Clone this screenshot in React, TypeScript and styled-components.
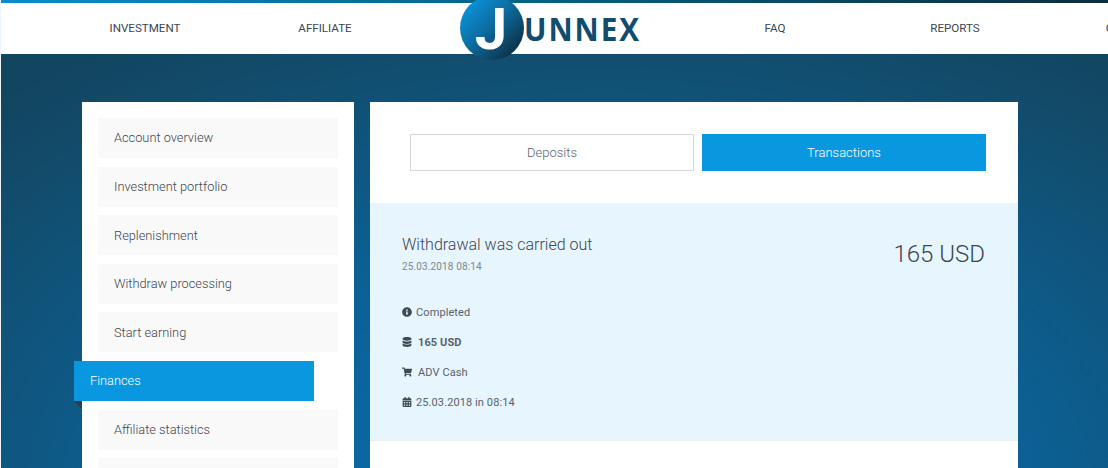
import React from 'react';
import styled, {createGlobalStyle} from 'styled-components';
import {FaInfoCircle, FaDatabase, FaShoppingCart, FaCalendarAlt} from 'react-icons/fa';

const GlobalStyle = createGlobalStyle`
  * {
    box-sizing: border-box;
  }

  html, body {
    margin: 0;
    padding: 0;
    height: 100%;
    overflow: hidden;
    background: #eef6fd;
    font-family: Roboto, "Liberation Sans", sans-serif;
  }
`

const menu = [
    'Account overview',
    'Investment portfolio',
    'Replenishment',
    'Withdraw processing',
    'Start earning',
    'Finances',
    'Affiliate statistics',
    '',
];

function App() {
    return (
        <Page>
            <GlobalStyle/>
            <TopLine/>
            <Header>
                <NavLink>INVESTMENT</NavLink>
                <NavLink>AFFILIATE</NavLink>
                <Logo>
                    <LogoCircle>J</LogoCircle>
                    <LogoText>UNNEX</LogoText>
                </Logo>
                <NavLink>FAQ</NavLink>
                <NavLink>REPORTS</NavLink>
                <NavLink>CONTACTS</NavLink>
            </Header>
            <Hero>
                <Sidebar>
                    {menu.map((item, index) => (
                        <MenuItem key={index} $active={item === 'Finances'}>
                            {item}
                        </MenuItem>
                    ))}
                </Sidebar>
                <Main>
                    <Tabs>
                        <Tab>Deposits</Tab>
                        <Tab $active>Transactions</Tab>
                    </Tabs>
                    <Transaction>
                        <TransactionHead>
                            <div>
                                <TransactionTitle>Withdrawal was carried out</TransactionTitle>
                                <TransactionDate>25.03.2018 08:14</TransactionDate>
                            </div>
                            <Amount>165 USD</Amount>
                        </TransactionHead>
                        <Details>
                            <DetailRow>
                                <FaInfoCircle/>
                                Completed
                            </DetailRow>
                            <DetailRow $bold $wide>
                                <FaDatabase/>
                                165 USD
                            </DetailRow>
                            <DetailRow $wide>
                                <FaShoppingCart/>
                                ADV Cash
                            </DetailRow>
                            <DetailRow>
                                <FaCalendarAlt/>
                                25.03.2018 in 08:14
                            </DetailRow>
                        </Details>
                    </Transaction>
                </Main>
            </Hero>
        </Page>
    );
}

export default App;

const Page = styled.div`
  width: 1108px;
  height: 468px;
  padding-left: 1px;
  overflow: hidden;
  position: relative;
`

const TopLine = styled.div`
  height: 3px;
  background: linear-gradient(90deg, #0a8ccb 0%, #05607f 50%, #0e2d3d 100%);
`

const Header = styled.header`
  display: flex;
  align-items: center;
  height: 51px;
  padding-left: 54px;
  background: #fff;
  width: 1300px;
`

const NavLink = styled.a`
  flex: 0 0 180px;
  text-align: center;
  font-size: 11.6px;
  color: #3c4650;
  padding-bottom: 1px;
`

const Logo = styled.div`
  flex: 0 0 270px;
  display: flex;
  align-items: center;
  justify-content: center;
  position: relative;
`

const LogoCircle = styled.div`
  flex: 0 0 64px;
  height: 64px;
  margin-top: -2px;
  border-radius: 50%;
  background: linear-gradient(135deg, #0a95dd 10%, #0d6ea3 45%, #0d2d40 90%);
  color: #fff;
  font-family: Roboto, sans-serif;
  font-weight: 700;
  font-size: 58px;
  line-height: 66px;
  text-align: center;
  position: relative;
  z-index: 2;
  padding-right: 2px;
`

const LogoText = styled.div`
  font-family: "Open Sans", sans-serif;
  font-weight: 700;
  font-size: 32px;
  letter-spacing: 2.1px;
  color: #124d6e;
  transform: scaleX(0.93);
  transform-origin: left center;
  width: 116px;
  white-space: nowrap;
`

const Hero = styled.section`
  display: flex;
  align-items: flex-start;
  gap: 16px;
  height: 414px;
  padding: 48px 0 0 81px;
  background: radial-gradient(ellipse 900px 540px at 600px 440px, #0a70b3 0%, #0c5f92 50%, #124c6c 85%, #12455f 100%);
`

const Sidebar = styled.nav`
  flex: 0 0 272px;
  display: flex;
  flex-direction: column;
  gap: 8.6px;
  padding: 16px;
  background: #fff;
`

const MenuItem = styled.a<{$active?: boolean}>`
  display: flex;
  align-items: center;
  flex: 0 0 40px;
  padding: 0 0 0.2px 16px;
  font-size: 12.8px;
  line-height: 15px;
  font-weight: 300;
  color: ${props => props.$active ? '#fff' : '#3c4650'};
  background: ${props => props.$active ? '#0998df' : '#f9f9f9'};
  position: relative;
  ${props => props.$active && `
    margin-left: -24px;
    margin-right: 24px;

    &::after {
      content: '';
      position: absolute;
      left: 0;
      top: 100%;
      border-top: 8px solid #333c44;
      border-left: 8px solid transparent;
    }
  `}
`

const Main = styled.main`
  flex: 0 0 648px;
  background: #fff;
  padding-top: 32px;
  min-height: 366px;
`

const Tabs = styled.div`
  display: grid;
  grid-template-columns: 284px 284px;
  gap: 8px;
  padding-left: 40px;
  margin-bottom: 32px;
`

const Tab = styled.button<{$active?: boolean}>`
  height: 37px;
  padding: 0;
  border: ${props => props.$active ? '0' : '1px solid #d3d6da'};
  border-radius: 0;
  font-family: inherit;
  font-size: 13px;
  font-weight: 300;
  color: ${props => props.$active ? '#fff' : '#59636d'};
  background: ${props => props.$active ? '#0998df' : '#fff'};
`

const Transaction = styled.div`
  height: 238px;
  padding: 33px 33px 0 32px;
  background: #e6f5fe;
  border-bottom: 1px solid #e8eef2;
`

const TransactionHead = styled.div`
  display: flex;
  justify-content: space-between;
  align-items: flex-start;
`

const TransactionTitle = styled.div`
  font-size: 16px;
  font-weight: 300;
  line-height: 18px;
  color: #3c4650;
`

const TransactionDate = styled.div`
  margin-top: 7px;
  font-size: 10px;
  letter-spacing: 0.14px;
  line-height: 12px;
  color: #80878e;
`

const Amount = styled.div`
  font-size: 24px;
  font-weight: 300;
  line-height: 34px;
  margin-top: 1px;
  color: #3c4650;
`

const Details = styled.div`
  display: flex;
  flex-direction: column;
  gap: 16px;
  margin-top: 32px;
`

const DetailRow = styled.div<{$bold?: boolean; $wide?: boolean}>`
  display: flex;
  align-items: center;
  gap: ${props => props.$wide ? '6px' : '4px'};
  height: 14px;
  font-size: 11px;
  letter-spacing: 0.1px;
  font-weight: ${props => props.$bold ? 700 : 400};
  color: #59636d;

  svg {
    width: 10px;
    height: 10px;
    color: #3f4a55;
  }
`
